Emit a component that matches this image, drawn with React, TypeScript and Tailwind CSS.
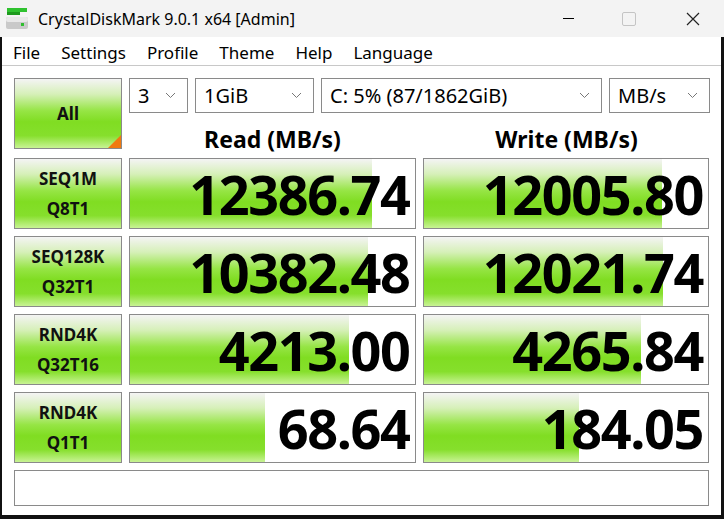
const bar =
  "bg-[linear-gradient(to_bottom,#f4f4f4_0%,#d6f0b8_22%,#96e545_46%,#80dd22_62%,#86df2c_82%,#c8f394_100%)]";

const rows = [
  { a: "SEQ1M", b: "Q8T1", r: "12386.74", rw: 85, w: "12005.80", ww: 84 },
  { a: "SEQ128K", b: "Q32T1", r: "10382.48", rw: 83.6, w: "12021.74", ww: 84.2 },
  { a: "RND4K", b: "Q32T16", r: "4213.00", rw: 77, w: "4265.84", ww: 76.6 },
  { a: "RND4K", b: "Q1T1", r: "68.64", rw: 47.5, w: "184.05", ww: 54.7 },
];

function Chevron() {
  return (
    <svg width="11" height="7" viewBox="0 0 11 7" className="shrink-0">
      <path d="M1 1l4.5 4.5L10 1" fill="none" stroke="#777" strokeWidth="1" />
    </svg>
  );
}

function Select({ text, className }: { text: string; className: string }) {
  return (
    <div
      className={`flex h-[35px] shrink-0 items-center justify-between border border-[#8a8a8a] bg-white pl-[8px] pr-[11px] text-[20px] text-black ${className}`}
    >
      <span>{text}</span>
      <Chevron />
    </div>
  );
}

function Value({ text, pct }: { text: string; pct: number }) {
  return (
    <div className="relative h-[71px] flex-1 border border-[#8a8a8a] bg-white">
      <div className={`absolute inset-y-0 left-0 ${bar}`} style={{ width: `${pct}%` }} />
      <div className="relative flex h-full items-center justify-end pr-[5px] text-[54px] font-bold leading-none tracking-[-1.4px] text-black">
        {text}
      </div>
    </div>
  );
}

function Label({ a, b }: { a: string; b: string }) {
  return (
    <div
      className={`flex h-[71px] w-[108px] shrink-0 flex-col items-center justify-center border border-[#8a8a8a] text-[17px] font-bold leading-[30px] text-[#111] ${bar}`}
    >
      <span>{a}</span>
      <span>{b}</span>
    </div>
  );
}

export default function App() {
  return (
    <div className="h-[519px] w-[724px] overflow-hidden bg-[#111] font-['Noto_Sans',sans-serif]">
      <div className="flex h-[37px] items-center bg-[#f3f3f3]">
        <svg width="24" height="24" viewBox="0 0 24 24" className="ml-[5px] mr-[9px]">
          <rect x="2" y="1" width="20" height="4" fill="#2fc22f" />
          <rect x="2" y="5" width="13" height="3" fill="#1d9a1d" />
          <rect x="1" y="10" width="22" height="12" rx="2" fill="#c9c9c9" />
          <rect x="1" y="10" width="22" height="5" rx="2" fill="#e8e8e8" />
          <rect x="16" y="16" width="3" height="3" fill="#2fbf2f" />
        </svg>
        <span className="text-[16px] text-black">CrystalDiskMark 9.0.1 x64 [Admin]</span>
        <div className="ml-auto flex h-full items-center">
          <div className="flex h-full w-[56px] items-center justify-center">
            <div className="h-px w-[11px] bg-black" />
          </div>
          <div className="flex h-full w-[66px] items-center justify-center">
            <div className="h-[14px] w-[14px] rounded-[2px] border border-[#c4c4c4]" />
          </div>
          <div className="flex h-full w-[62px] items-center justify-center">
            <svg width="14" height="14" viewBox="0 0 14 14">
              <path d="M1 1l12 12M13 1L1 13" stroke="#222" strokeWidth="1.2" />
            </svg>
          </div>
        </div>
      </div>
      <div className="ml-[2px] mr-[3px] h-[478px] bg-white">
        <div className="flex h-[29px] items-center gap-[21px] border-b border-[#c8c8c8] pl-[11px] pt-[3px] text-[17px] text-black">
          <span>File</span>
          <span>Settings</span>
          <span>Profile</span>
          <span>Theme</span>
          <span>Help</span>
          <span>Language</span>
        </div>
        <div className="flex flex-col gap-[7px] px-[12px] pt-[12px]">
          <div className="flex gap-[7px]">
            <div
              className={`relative flex h-[71px] w-[108px] shrink-0 items-center justify-center border border-[#8a8a8a] text-[17px] font-bold text-[#111] ${bar}`}
            >
              All
              <div className="absolute bottom-0 right-0 h-0 w-0 border-b-[13px] border-l-[13px] border-b-[#f07a10] border-l-transparent" />
            </div>
            <div className="flex flex-1 flex-col">
              <div className="flex gap-[7px]">
                <Select text="3" className="w-[59px]" />
                <Select text="1GiB" className="w-[119px]" />
                <Select text="C: 5% (87/1862GiB)" className="w-[281px]" />
                <Select text="MB/s" className="w-[101px]" />
              </div>
              <div className="flex gap-[7px] pt-[15px] text-[23px] font-bold leading-none text-black">
                <div className="flex-1 text-center">Read (MB/s)</div>
                <div className="flex-1 text-center">Write (MB/s)</div>
              </div>
            </div>
          </div>
          {rows.map((r) => (
            <div key={r.a + r.b} className="flex gap-[7px]">
              <Label a={r.a} b={r.b} />
              <Value text={r.r} pct={r.rw} />
              <Value text={r.w} pct={r.ww} />
            </div>
          ))}
          <div className="h-[36px] border border-[#8a8a8a] bg-white" />
        </div>
      </div>
    </div>
  );
}
